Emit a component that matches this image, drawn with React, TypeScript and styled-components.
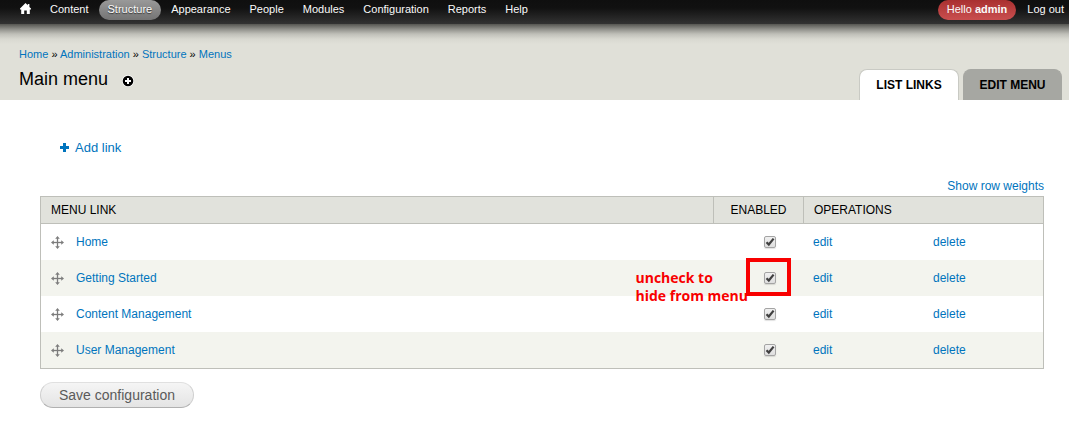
import React from "react";
import styled, { createGlobalStyle } from "styled-components";

const sans = `"Liberation Sans", Arial, sans-serif`;

const GlobalStyle = createGlobalStyle`
  * { box-sizing: border-box; }
  body { margin: 0; background: #fff; color: #000; font: 12px/18px ${sans}; }
  a { color: #0074bd; text-decoration: none; }
  a:hover { text-decoration: underline; }
`;

const Toolbar = styled.nav`
  position: relative;
  display: flex;
  justify-content: space-between;
  height: 24px;
  padding: 0 5px 0 11px;
  background: linear-gradient(#0f0f0f 0, #111 8px, #333 24px);
  font-size: 11px;
  line-height: 18px;

  &::after {
    content: "";
    position: absolute;
    left: 0;
    right: 0;
    top: 24px;
    height: 20px;
    pointer-events: none;
    background: linear-gradient(
      rgba(20, 20, 18, 0.68) 0,
      rgba(20, 20, 18, 0.4) 5px,
      rgba(20, 20, 18, 0.16) 10px,
      rgba(20, 20, 18, 0.04) 15px,
      rgba(20, 20, 18, 0) 20px
    );
  }
`;

const ToolbarGroup = styled.div`
  display: flex;
  align-items: flex-start;
  gap: 1px;
`;

const UserGroup = styled(ToolbarGroup)`
  gap: 2px;
`;

const ToolbarLink = styled.a<{ $kind?: "active" | "user" }>`
  display: block;
  height: 20px;
  padding: 0 9px;
  border-radius: 10px;
  && { color: #fafafa; }
  white-space: nowrap;
  ${({ $kind }) =>
    $kind === "active" &&
    `background: linear-gradient(#999, #747474); text-shadow: 0 1px 1px #333;`}
  ${({ $kind }) =>
    $kind === "user" &&
    `background: linear-gradient(#a93030, #c94f4f);`}
`;

const HomeLink = styled(ToolbarLink)`
  padding-top: 3px;
`;

const LogoutLink = styled(ToolbarLink)`
  padding-right: 0;
`;

const Branding = styled.header`
  display: flex;
  justify-content: space-between;
  align-items: flex-end;
  height: 76px;
  padding: 0 7px 0 19px;
  background: #e0e0d8;
`;

const Heading = styled.div`
  align-self: flex-start;
  padding-top: 22px;
`;

const Breadcrumb = styled.div`
  font-size: 11px;
  line-height: 16px;
`;

const TitleRow = styled.div`
  display: flex;
  align-items: center;
  gap: 14px;
  padding-top: 6px;
`;

const Title = styled.h1`
  margin: 0;
  font-size: 18px;
  font-weight: normal;
  line-height: 22px;
`;

const IconButton = styled.button`
  display: block;
  width: 12px;
  height: 12px;
  margin-top: 4px;
  padding: 0;
  border: 0;
  background: none;
`;

const Tabs = styled.nav`
  display: flex;
  gap: 4px;
`;

const Tab = styled.a<{ $active?: boolean }>`
  width: ${({ $active }) => ($active ? 100 : 99)}px;
  height: 31px;
  border: 1px solid ${({ $active }) => ($active ? "#c9cac4" : "#a6a7a2")};
  border-bottom: 0;
  border-radius: 8px 8px 0 0;
  background: ${({ $active }) => ($active ? "#fff" : "#a6a7a2")};
  && { color: #000; }
  font-weight: bold;
  line-height: 30px;
  text-align: center;
`;

const Main = styled.main`
  padding: 38px 25px 20px 40px;
`;

const AddLink = styled.a`
  display: inline-flex;
  align-items: center;
  gap: 6px;
  margin-left: 20px;
  font-size: 13px;
  line-height: 19px;
`;

const TableTools = styled.div`
  padding: 20px 0 1px;
  text-align: right;
`;

const Table = styled.table`
  width: 100%;
  border: 1px solid #bebfb9;
  border-collapse: separate;
  border-spacing: 0;
  table-layout: fixed;
`;

const Th = styled.th<{ $width?: number; $center?: boolean }>`
  width: ${({ $width }) => ($width ? `${$width}px` : "auto")};
  height: 27px;
  padding: 0 10px;
  border-bottom: 1px solid #bebfb9;
  background: #e1e2dc;
  font-weight: normal;
  text-align: ${({ $center }) => ($center ? "center" : "left")};
  text-transform: uppercase;

  & + & { border-left: 1px solid #bebfb9; }
`;

const Row = styled.tr`
  height: 36px;
  &:nth-child(even) { background: #f3f4ee; }
`;

const Td = styled.td`
  padding: 0 10px;
`;

const CenterTd = styled.td`
  position: relative;
  padding: 0 0 2px 24px;
  text-align: center;
`;

const LinkCell = styled.div`
  display: flex;
  align-items: center;
  gap: 12px;
`;

const CheckLabel = styled.label`
  display: inline-grid;
  width: 12px;
  height: 12px;
  vertical-align: middle;

  & > * { grid-area: 1 / 1; }
`;

const Checkbox = styled.input`
  appearance: none;
  width: 12px;
  height: 12px;
  margin: 0;
  border: 1px solid #a4a4a4;
  border-radius: 2px;
  background: linear-gradient(#f0f0f0, #dedede);
  box-shadow: 0 1px 1px rgba(0, 0, 0, 0.12);

  & + svg { visibility: hidden; pointer-events: none; }
  &:checked + svg { visibility: visible; }
`;

const Highlight = styled.div`
  position: absolute;
  z-index: 1;
  left: 33px;
  top: -2px;
  width: 45px;
  height: 38px;
  border: 4px solid #f80000;
  pointer-events: none;
`;

const Note = styled.div`
  position: absolute;
  z-index: 1;
  right: 100%;
  top: 9px;
  margin-right: -35px;
  color: #f80000;
  font: bold 14px/18px "Open Sans", sans-serif;
  text-align: left;
  white-space: nowrap;
`;

const SaveButton = styled.button`
  height: 26px;
  margin-top: 13px;
  padding: 0 18px;
  border: 1px solid #cfcfcf;
  border-top-color: #e0e0e0;
  border-bottom-color: #b0b0b0;
  border-radius: 13px;
  background: linear-gradient(#f5f5f5, #e4e4e4);
  color: #5a5a5a;
  font: 14px/22px ${sans};
`;

const Drawing = styled.svg`
  display: block;
  flex: none;
`;

const HomeIcon = () => (
  <Drawing width="11" height="11" viewBox="0 0 11 11" fill="#fff">
    <path d="M5.5 0L7.8 2.3V1H9.4V3.9L11 5.5V6.6H9.8V11H6.8V7.4H4.2V11H1.2V6.6H0V5.5Z" />
  </Drawing>
);

const MoveIcon = () => (
  <Drawing width="13" height="13" viewBox="0 0 13 13" fill="#7d7d7d">
    <path d="M6 2H7V6H11V7H7V11H6V7H2V6H6Z" stroke="#7d7d7d" strokeWidth=".3" />
    <path d="M6.5 0L8.8 2.8H4.2ZM6.5 13L8.8 10.2H4.2ZM0 6.5L2.8 4.2V8.8ZM13 6.5L10.2 4.2V8.8Z" />
  </Drawing>
);

const CheckMark = () => (
  <Drawing width="12" height="12" viewBox="0 0 12 12" fill="none" stroke="#404040" strokeWidth="2.2">
    <path d="M2.5 6.2L4.8 8.5L9.6 2.6" />
  </Drawing>
);

const toolbarItems = ["Content", "Structure", "Appearance", "People", "Modules", "Configuration", "Reports", "Help"];
const crumbs = ["Home", "Administration", "Structure", "Menus"];
const rows = ["Home", "Getting Started", "Content Management", "User Management"];

export default function App() {
  return (
    <>
      <GlobalStyle />
      <Toolbar aria-label="Administration">
        <ToolbarGroup>
          <HomeLink href="#" aria-label="Home"><HomeIcon /></HomeLink>
          {toolbarItems.map((item) => (
            <ToolbarLink key={item} href="#" $kind={item === "Structure" ? "active" : undefined}>{item}</ToolbarLink>
          ))}
        </ToolbarGroup>
        <UserGroup>
          <ToolbarLink href="#" $kind="user">Hello <strong>admin</strong></ToolbarLink>
          <LogoutLink href="#">Log out</LogoutLink>
        </UserGroup>
      </Toolbar>
      <Branding>
        <Heading>
          <Breadcrumb>
            {crumbs.map((crumb, i) => (
              <React.Fragment key={crumb}>
                {i > 0 && " » "}
                <a href="#">{crumb}</a>
              </React.Fragment>
            ))}
          </Breadcrumb>
          <TitleRow>
            <Title>Main menu</Title>
            <IconButton type="button" aria-label="Add to shortcuts">
              <Drawing width="12" height="12" viewBox="0 0 12 12">
                <circle cx="6" cy="6" r="6" fill="#fff" />
                <circle cx="6" cy="6" r="5.3" fill="#000" />
                <path d="M6 3V9M3 6H9" stroke="#fff" strokeWidth="2" />
              </Drawing>
            </IconButton>
          </TitleRow>
        </Heading>
        <Tabs aria-label="Menu tabs">
          <Tab href="#" $active>LIST LINKS</Tab>
          <Tab href="#">EDIT MENU</Tab>
        </Tabs>
      </Branding>
      <Main>
        <AddLink href="#">
          <Drawing width="9" height="9" viewBox="0 0 9 9" fill="#0074bd">
            <path d="M3 0H6V3H9V6H6V9H3V6H0V3H3Z" />
          </Drawing>
          Add link
        </AddLink>
        <TableTools><a href="#">Show row weights</a></TableTools>
        <Table>
          <thead>
            <tr>
              <Th>Menu link</Th>
              <Th $width={90} $center>Enabled</Th>
              <Th $width={240} colSpan={2}>Operations</Th>
            </tr>
          </thead>
          <tbody>
            {rows.map((row) => (
              <Row key={row}>
                <Td><LinkCell><MoveIcon /><a href="#">{row}</a></LinkCell></Td>
                <CenterTd>
                  <CheckLabel>
                    <Checkbox type="checkbox" defaultChecked aria-label={`Enable ${row}`} />
                    <CheckMark />
                  </CheckLabel>
                  {row === "Getting Started" && (
                    <>
                      <Note>uncheck to<br />hide from menu</Note>
                      <Highlight />
                    </>
                  )}
                </CenterTd>
                <Td><a href="#">edit</a></Td>
                <Td><a href="#">delete</a></Td>
              </Row>
            ))}
          </tbody>
        </Table>
        <SaveButton type="button">Save configuration</SaveButton>
      </Main>
    </>
  );
}
